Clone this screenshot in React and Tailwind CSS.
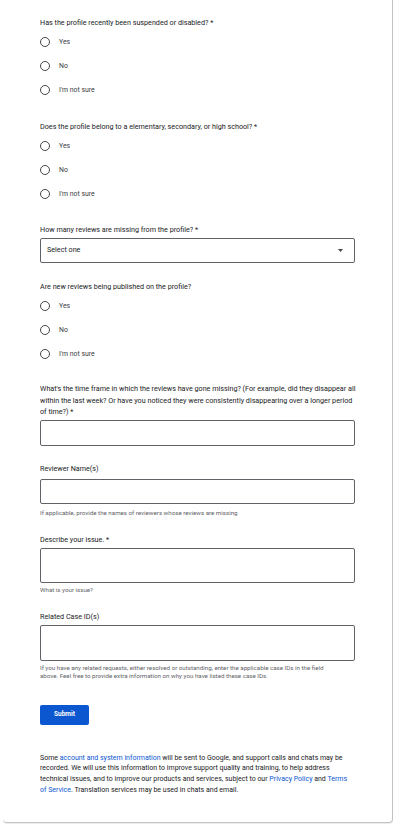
import React from 'react';

const font = { fontFamily: 'Roboto, "Noto Sans", Arial, sans-serif' };

const RadioGroup = ({ name }) => (
    <div className="flex flex-col">
        {['Yes', 'No', "I'm not sure"].map((opt) => (
            <label key={opt} className="flex items-center h-[24px] cursor-pointer">
                <span className="w-[10px] h-[10px] rounded-full border border-[#444746] shrink-0" />
                <span className="ml-[9px] text-[6.9px] leading-[10px] text-[#3c4043]">{opt}</span>
                <input type="radio" name={name} className="hidden" />
            </label>
        ))}
    </div>
);

const Label = ({ children, className = '' }) => (
    <div className={`text-[7.2px] leading-[12px] text-[#202124] ${className}`}>{children}</div>
);

const Helper = ({ children, className = '' }) => (
    <div className={`text-[6.2px] leading-[8px] text-[#5f6368] ${className}`}>{children}</div>
);

const Box = ({ h }) => (
    <div className={`w-[315px] ${h} border border-[#5f6368] rounded-[2px] bg-white`} />
);

export default function App() {
    return (
        <div className="w-[396px] h-[826px] bg-white overflow-hidden" style={font}>
            <div className="ml-[3px] w-[390px] border-r border-b border-[#c2c2c2] rounded-b-[4px] shadow-[0_1px_1px_rgba(0,0,0,0.08)] pl-[37px] pt-[17px] pb-[27px]">
                {/* Suspended */}
                <Label className="mb-[1px]">Has the profile recently been suspended or disabled? *</Label>
                <RadioGroup name="suspended" />

                {/* School */}
                <Label className="mt-[19px] mb-[1px]">Does the profile belong to a elementary, secondary, or high school? *</Label>
                <RadioGroup name="school" />

                {/* Count */}
                <Label className="mt-[18px]">How many reviews are missing from the profile? *</Label>
                <div className="mt-[2px] w-[315px] h-[25px] border border-[#5f6368] rounded-[2px] flex items-center justify-between pl-[6px] pr-[11px]">
                    <span className="text-[7.2px] text-[#202124]">Select one</span>
                    <svg width="5" height="3" viewBox="0 0 5 3"><path d="M0 0h5L2.5 3z" fill="#444746" /></svg>
                </div>

                {/* New reviews */}
                <Label className="mt-[18px] mb-[1px]">Are new reviews being published on the profile?</Label>
                <RadioGroup name="published" />

                {/* Time frame */}
                <div className="mt-[17px] w-[318px] text-[7.2px] leading-[11.5px] text-[#202124]">
                    What's the time frame in which the reviews have gone missing? (For example, did they disappear all within the last week? Or have you noticed they were consistently disappearing over a longer period of time?) *
                </div>
                <div className="mt-[2px]"><Box h="h-[26px]" /></div>

                {/* Reviewer */}
                <Label className="mt-[17px]">Reviewer Name(s)</Label>
                <div className="mt-[4px]"><Box h="h-[25px]" /></div>
                <Helper className="mt-[5px]">If applicable, provide the names of reviewers whose reviews are missing</Helper>

                {/* Describe */}
                <Label className="mt-[17px]">Describe your issue. *</Label>
                <div className="mt-[2px]"><Box h="h-[35px]" /></div>
                <Helper className="mt-[3px]">What is your issue?</Helper>

                {/* Related */}
                <Label className="mt-[17px]">Related Case ID(s)</Label>
                <div className="mt-[2px]"><Box h="h-[36px]" /></div>
                <Helper className="mt-[3px] w-[287px]">
                    If you have any related requests, either resolved or outstanding, enter the applicable case IDs in the field above. Feel free to provide extra information on why you have listed these case IDs.
                </Helper>

                <button className="mt-[25px] w-[49px] h-[20px] bg-[#0b57d0] rounded-[2px] text-white text-[6.5px] font-bold flex items-center justify-center">
                    Submit
                </button>

                {/* Footer */}
                <div className="mt-[28px] w-[309px] text-[7px] leading-[10.7px] text-[#202124]">
                    Some <span className="text-[#0b57d0]">account and system information</span> will be sent to Google, and support calls and chats may be recorded. We will use this information to improve support quality and training, to help address technical issues, and to improve our products and services, subject to our <span className="text-[#0b57d0]">Privacy Policy</span> and <span className="text-[#0b57d0]">Terms of Service</span>. Translation services may be used in chats and email.
                </div>
            </div>
        </div>
    );
}
